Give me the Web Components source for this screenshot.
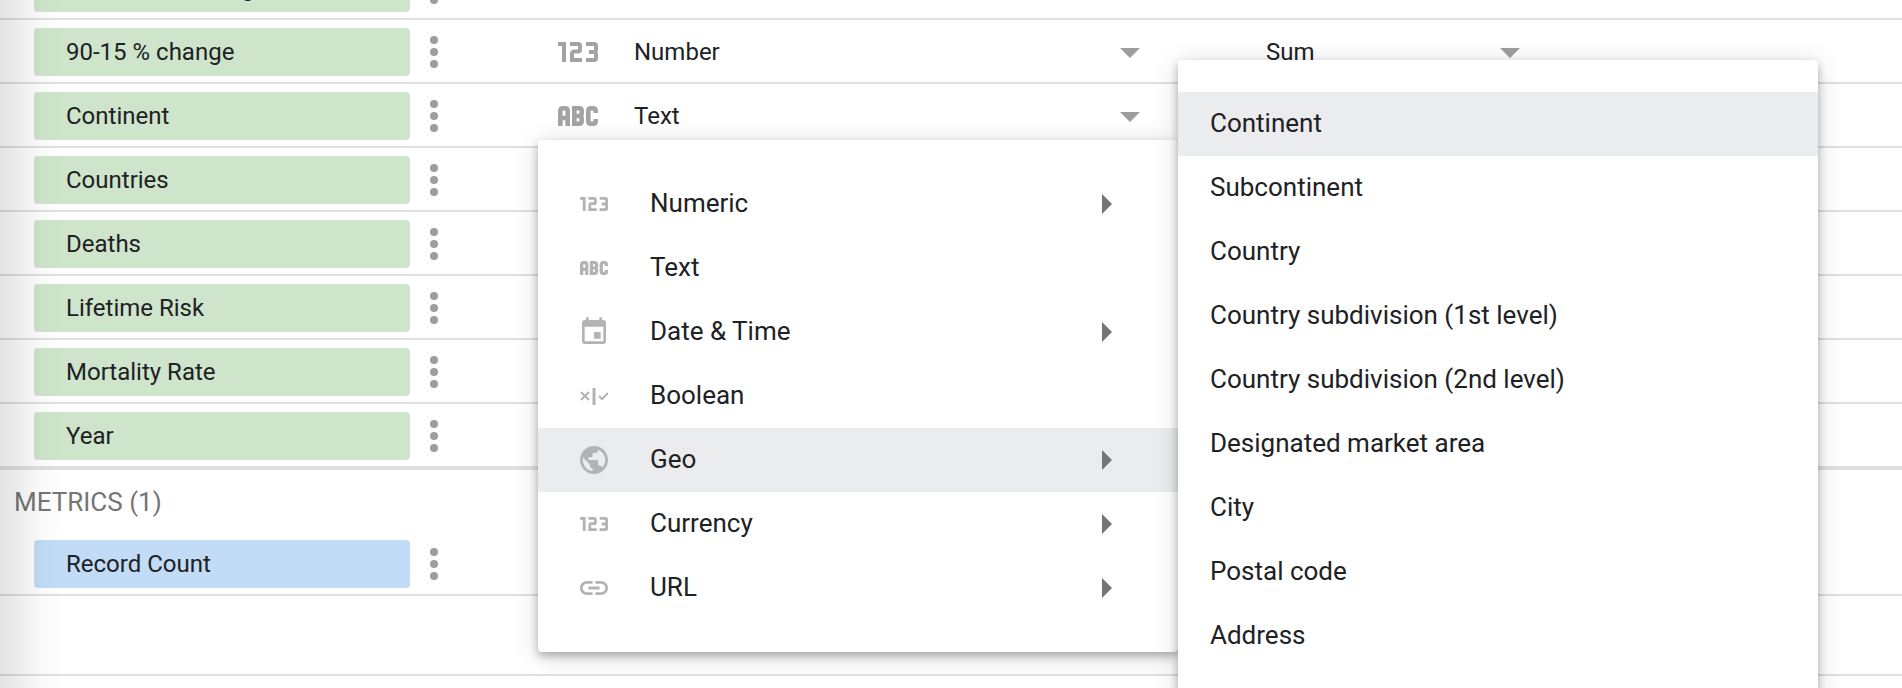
<!DOCTYPE html>
<html lang="en">
<head>
<meta charset="utf-8">
<title>Data source fields</title>
<style>
html, body { margin: 0; height: 100%; }
body { overflow: hidden; background: #fff; color: #202124; font: 24px/32px Roboto, sans-serif; }
</style>
</head>
<body>
<fields-page></fields-page>
<script>
const ICONS = {
  num: '<svg viewBox="0 0 40 20" width="100%" height="100%" fill="none" stroke="currentColor" stroke-width="4"><path d="M0 2H6V20M12 2H20Q22 2 22 4V7Q22 9.500 20 9.500H16Q14 9.500 14 12V18H24M28 2H36Q38 2 38 4V7.500Q38 10 36 10H31M36 10Q38 10 38 12.500V16Q38 18 36 18H28"/></svg>',
  abc: '<svg viewBox="0 0 40 20" width="100%" height="100%" fill="none" stroke="currentColor" stroke-width="4.600"><path d="M2.300 20V5Q2.300 2.300 5 2.300H7Q9.700 2.300 9.700 5V20M2 12H10M16.300 0V20M14 2.300H21Q23.700 2.300 23.700 5V7Q23.700 10 21 10H16M21 10Q23.700 10 23.700 13V15Q23.700 17.700 21 17.700H14M37.700 7V5Q37.700 2.300 35 2.300H33Q30.300 2.300 30.300 5V15Q30.300 17.700 33 17.700H35Q37.700 17.700 37.700 15V13"/></svg>',
  date: '<svg viewBox="2 0 20 24" width="100%" height="100%" fill="currentColor"><path d="M17 12h-5v5h5v-5zM16 1v2H8V1H6v2H5c-1.110 0-1.990.9-1.990 2L3 19c0 1.100.89 2 2 2h14c1.100 0 2-.9 2-2V5c0-1.100-.9-2-2-2h-1V1h-2zm3 18H5V8h14v11z"/></svg>',
  bool: '<svg viewBox="0 0 28 18" width="100%" height="100%" fill="none" stroke="currentColor" stroke-width="2"><path d="M1 5L9 13M9 5L1 13M19 9L22 12L28 6"/><path d="M14 1V18" stroke-width="3"/></svg>',
  geo: '<svg viewBox="2 2 20 20" width="100%" height="100%" fill="currentColor"><path d="M12 2C6.480 2 2 6.480 2 12s4.480 10 10 10 10-4.480 10-10S17.520 2 12 2zm-1 17.930c-3.950-.49-7-3.850-7-7.930 0-.62.080-1.210.210-1.790L9 15v1c0 1.100.9 2 2 2v1.930zm6.900-2.540c-.26-.81-1-1.390-1.900-1.390h-1v-3c0-.55-.45-1-1-1H8v-2h2c.55 0 1-.45 1-1V7h2c1.100 0 2-.9 2-2v-.41c2.930 1.190 5 4.060 5 7.410 0 2.080-.8 3.970-2.100 5.390z"/></svg>',
  url: '<svg viewBox="2 7 20 10" width="100%" height="100%" fill="currentColor"><path d="M3.900 12c0-1.710 1.390-3.100 3.100-3.100h4V7H7c-2.760 0-5 2.240-5 5s2.240 5 5 5h4v-1.900H7c-1.710 0-3.100-1.390-3.100-3.100zM8 13h8v-2H8v2zm9-6h-4v1.900h4c1.710 0 3.100 1.390 3.100 3.100s-1.390 3.100-3.100 3.100h-4V17h4c2.760 0 5-2.240 5-5s-2.240-5-5-5z"/></svg>'
};

/* Glyph for a field type; the large attribute gives the table-row size, otherwise menu size. */
customElements.define('type-icon', class extends HTMLElement {
  connectedCallback() {
    const kind = this.getAttribute('kind');
    const sizes = { num: [28, 14], abc: [28, 14], date: [28, 32], bool: [28, 18], geo: [28, 28], url: [28, 14] };
    const [w, h] = this.hasAttribute('large') ? [40, 20] : sizes[kind];
    this.attachShadow({ mode: 'open' }).innerHTML = `
      <style>
        :host { display: block; flex: none; width: ${w}px; height: ${h}px; color: ${this.hasAttribute('large') ? '#a3a3a3' : '#b3b3b3'}; }
        svg { display: block; }
      </style>${ICONS[kind]}`;
  }
});

customElements.define('field-chip', class extends HTMLElement {
  constructor() {
    super();
    this.attachShadow({ mode: 'open' }).innerHTML = `
      <style>
        :host { display: flex; align-items: center; padding-left: 34px; }
        .chip { box-sizing: border-box; flex: 1; height: 48px; padding: 8px 32px; border-radius: 4px; background: #cee5cb; white-space: nowrap; }
        :host([metric]) .chip { background: #c2dcf7; }
        button { width: 48px; height: 48px; padding: 0; border: 0; background: none; color: #9e9e9e; }
        svg { display: block; }
      </style>
      <div class="chip"><slot></slot></div>
      <button type="button" aria-label="More options">
        <svg width="48" height="48" fill="currentColor"><circle cx="24" cy="12" r="4"/><circle cx="24" cy="24" r="4"/><circle cx="24" cy="36" r="4"/></svg>
      </button>`;
  }
});

customElements.define('cell-select', class extends HTMLElement {
  connectedCallback() {
    const value = this.getAttribute('value');
    this.attachShadow({ mode: 'open' }).innerHTML = `
      <style>
        :host { display: grid; align-items: center; }
        select { grid-area: 1 / 1; appearance: none; width: 100%; height: 48px; margin: 0; padding: 0; border: 0; background: none; color: inherit; font: inherit; }
        svg { grid-area: 1 / 1; justify-self: end; pointer-events: none; color: #9e9e9e; }
      </style>
      <select aria-label="${this.getAttribute('label')}"><option>${value}</option></select>
      <svg width="20" height="12" fill="currentColor"><path d="M0 2H20L10 12Z"/></svg>`;
  }
});

customElements.define('field-table', class extends HTMLElement {
  constructor() {
    super();
    const row = ([name, kind, type, agg]) => `
      <tr>
        <td><field-chip>${name}</field-chip></td>
        <td>${kind ? `<div class="type"><type-icon large kind="${kind}"></type-icon><cell-select label="Type" value="${type}"></cell-select></div>` : ''}</td>
        <td>${agg ? `<cell-select class="agg" label="Aggregation" value="${agg}"></cell-select>` : ''}</td>
        <td></td>
      </tr>`;
    const rows = [
      ['1990 -15 % change'], ['90-15 % change', 'num', 'Number', 'Sum'], ['Continent', 'abc', 'Text'],
      ['Countries'], ['Deaths'], ['Lifetime Risk'], ['Mortality Rate'], ['Year']
    ];
    this.attachShadow({ mode: 'open' }).innerHTML = `
      <style>
        :host { display: block; }
        table { width: 100%; border-collapse: separate; border-spacing: 0; table-layout: fixed; }
        .c1 { width: 458px; } .c2 { width: 682px; } .c3 { width: 380px; }
        td, th { box-sizing: border-box; height: 64px; padding: 8px 0 6px; border-bottom: 2px solid #e0e0e0; vertical-align: top; text-align: left; }
        th { height: 64px; padding: 16px 14px 14px; border-top: 2px solid #e0e0e0; border-bottom: 0; font-size: 26px; font-weight: 400; color: #757575; }
        .blank td { height: 80px; }
        .type { display: grid; grid-template-columns: 40px 1fr; column-gap: 36px; align-items: center; padding-left: 100px; }
        .agg { padding-left: 126px; }
      </style>
      <table>
        <colgroup><col class="c1"><col class="c2"><col class="c3"><col></colgroup>
        <tbody>${rows.map(row).join('')}</tbody>
        <tbody>
          <tr><th colspan="4" scope="rowgroup">METRICS (1)</th></tr>
          <tr><td><field-chip metric>Record Count</field-chip></td><td></td><td></td><td></td></tr>
          <tr class="blank"><td colspan="4"></td></tr>
        </tbody>
      </table>`;
  }
});

customElements.define('menu-panel', class extends HTMLElement {
  constructor() {
    super();
    this.attachShadow({ mode: 'open' }).innerHTML = `
      <style>
        :host { display: block; box-sizing: border-box; width: 640px; padding: 32px 0; border-radius: 4px; background: #fff;
          box-shadow: 0 4px 8px rgba(0,0,0,.28), 0 4px 28px rgba(0,0,0,.14); }
      </style>
      <div role="menu"><slot></slot></div>`;
  }
});

customElements.define('menu-entry', class extends HTMLElement {
  connectedCallback() {
    const icon = this.getAttribute('icon');
    this.attachShadow({ mode: 'open' }).innerHTML = `
      <style>
        :host { display: block; }
        button { display: flex; align-items: center; width: 100%; height: 64px; padding: 0 66px 0 32px; border: 0; background: none;
          color: inherit; font: inherit; font-size: 26px; text-align: left; }
        :host([active]) button { background: #ebecee; }
        .icon { display: flex; justify-content: center; width: 48px; margin-right: 32px; }
        .label { flex: 1; padding-bottom: 2px; white-space: nowrap; }
        .arrow { color: #757575; }
      </style>
      <button type="button" role="menuitem">
        ${icon ? `<span class="icon"><type-icon kind="${icon}"></type-icon></span>` : ''}
        <span class="label"><slot></slot></span>
        ${this.hasAttribute('more') ? '<svg class="arrow" width="10" height="20" fill="currentColor"><path d="M0 0L10 10L0 20Z"/></svg>' : ''}
      </button>`;
  }
});

customElements.define('fields-page', class extends HTMLElement {
  constructor() {
    super();
    this.attachShadow({ mode: 'open' }).innerHTML = `
      <style>
        :host { display: block; position: relative; height: 100vh; overflow: hidden; }
        field-table { margin-top: -44px; }
        .edge { position: absolute; inset: 0 auto 0 0; width: 64px; pointer-events: none;
          background: linear-gradient(90deg, rgba(0,0,0,.11), rgba(0,0,0,.07) 30%, rgba(0,0,0,.02) 65%, transparent); }
        .types { position: absolute; left: 538px; top: 140px; }
        .geo { position: absolute; left: 1178px; top: 60px; }
      </style>
      <field-table></field-table>
      <div class="edge"></div>
      <menu-panel class="types">
        <menu-entry icon="num" more>Numeric</menu-entry>
        <menu-entry icon="abc">Text</menu-entry>
        <menu-entry icon="date" more>Date &amp; Time</menu-entry>
        <menu-entry icon="bool">Boolean</menu-entry>
        <menu-entry icon="geo" more active>Geo</menu-entry>
        <menu-entry icon="num" more>Currency</menu-entry>
        <menu-entry icon="url" more>URL</menu-entry>
      </menu-panel>
      <menu-panel class="geo">
        <menu-entry active>Continent</menu-entry>
        <menu-entry>Subcontinent</menu-entry>
        <menu-entry>Country</menu-entry>
        <menu-entry>Country subdivision (1st level)</menu-entry>
        <menu-entry>Country subdivision (2nd level)</menu-entry>
        <menu-entry>Designated market area</menu-entry>
        <menu-entry>City</menu-entry>
        <menu-entry>Postal code</menu-entry>
        <menu-entry>Address</menu-entry>
      </menu-panel>`;
  }
});
</script>
</body>
</html>
